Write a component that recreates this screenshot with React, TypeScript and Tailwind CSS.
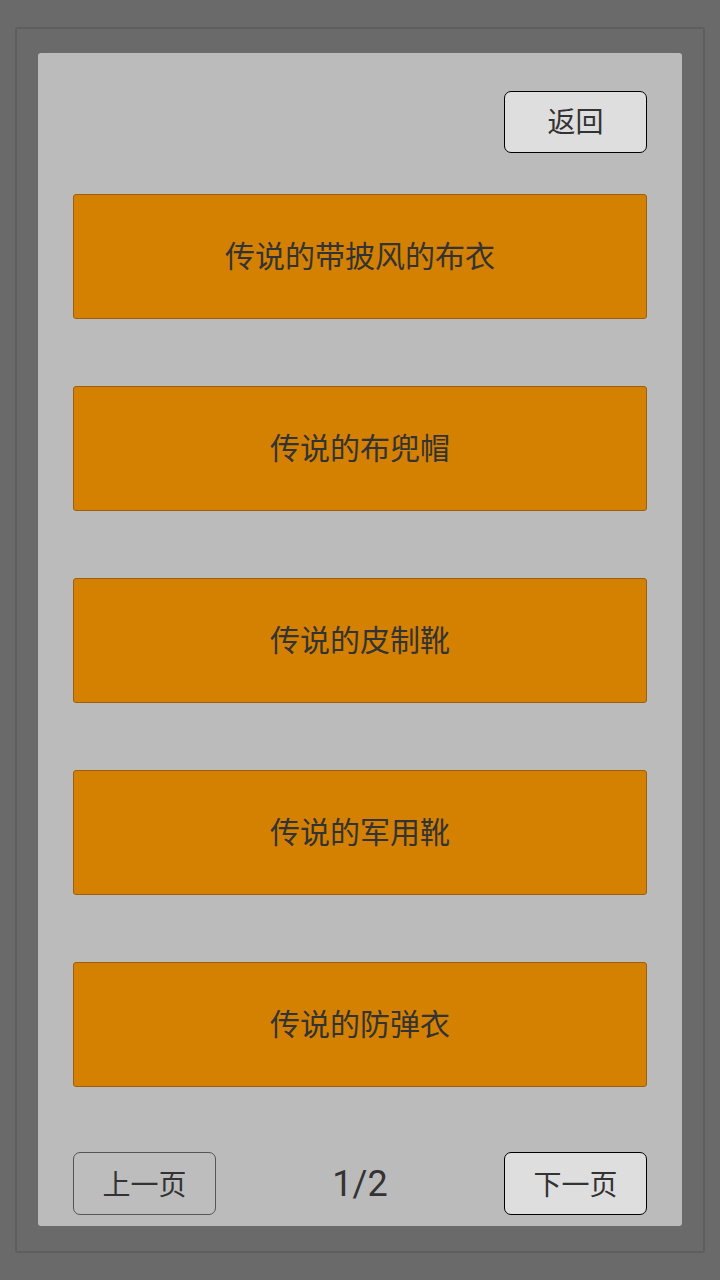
import React from "react";

const items = ["传说的带披风的布衣", "传说的布兜帽", "传说的皮制靴", "传说的军用靴", "传说的防弹衣"];

const font = { fontFamily: '"Noto Sans CJK SC", "Noto Sans", sans-serif' };

export default function App() {
  return (
    <div className="w-[720px] h-[1280px] bg-[#6a6a6a] pt-[27px] px-[15px]" style={font}>
      <div className="h-[1226px] border-2 border-[#5e5e5e] rounded-[3px] pt-[24px] px-[21px]">
        <div className="h-[1173px] bg-[#bbbbbb] rounded-[3px] flex flex-col px-[35px] pt-[38px] pb-[11px]">
          <div className="flex justify-end">
            <button className="w-[143px] h-[62px] bg-[#dedede] border-[1.5px] border-black rounded-[7px] text-[28px] text-[#333] leading-none flex items-center justify-center pb-[4px]">
              返回
            </button>
          </div>

          <div className="flex flex-col gap-[67px] mt-[41px]">
            {items.map((name) => (
              <div
                key={name}
                className="h-[125px] bg-[#d48000] border border-[#9a6010] rounded-[3px] flex items-center justify-center text-[30px] text-[#333] pb-[4px]"
              >
                {name}
              </div>
            ))}
          </div>

          <div className="mt-auto flex items-center justify-between">
            <button className="w-[143px] h-[63px] bg-[#bdbdbd] border-[1.5px] border-[#555] rounded-[7px] text-[28px] text-[#333] leading-none flex items-center justify-center pb-[2px]">
              上一页
            </button>
            <span className="text-[36px] text-[#333]" style={{ fontFamily: 'Roboto, "Noto Sans", sans-serif' }}>
              1/2
            </span>
            <button className="w-[143px] h-[63px] bg-[#dedede] border-[1.5px] border-black rounded-[7px] text-[28px] text-[#333] leading-none flex items-center justify-center pb-[2px]">
              下一页
            </button>
          </div>
        </div>
      </div>
    </div>
  );
}
